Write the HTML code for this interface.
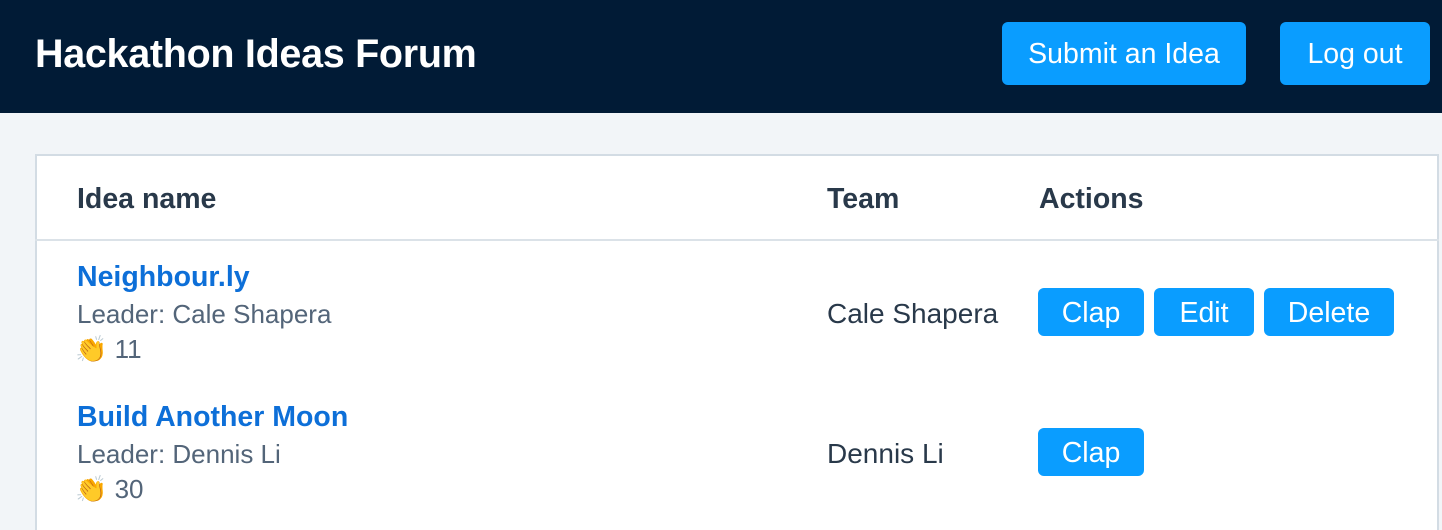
<!DOCTYPE html><html><head><style>
*{margin:0;padding:0;box-sizing:border-box}
html,body{width:1442px;height:530px;overflow:hidden}
body{background:#f2f5f8;font-family:"Liberation Sans",sans-serif;position:relative}
.hdr{position:absolute;left:0;top:0;width:1442px;height:113px;background:#011b36}
.t{position:absolute;left:35px;top:32px;color:#fff;font-size:39.5px;font-weight:bold;letter-spacing:-0.3px}
.b{position:absolute;background:#0a9dff;color:#fff;border-radius:6px;display:flex;align-items:center;justify-content:center;font-size:28.5px;padding-top:2px}
.card{position:absolute;left:35px;top:154px;width:1404px;height:376px;background:#fff;border:2px solid #d3dce4;border-bottom:none}
.line{position:absolute;left:35px;top:239px;width:1404px;height:2px;background:#dbe2e8}
.a{position:absolute;white-space:nowrap}
.h{font-size:28.5px;font-weight:bold;color:#29394a;top:183px}
.n{font-size:28.5px;font-weight:bold;color:#0d6fd8}
.l{font-size:26px;color:#536579}
.c{font-size:26px;color:#536579}
.tm{font-size:28px;color:#29394a}
</style></head><body>
<div class="hdr"></div>
<div class="t">Hackathon Ideas Forum</div>
<div class="b" style="left:1002px;top:22px;width:244px;height:63px">Submit an Idea</div>
<div class="b" style="left:1280px;top:22px;width:150px;height:63px">Log out</div>
<div class="card"></div>
<div class="line"></div>
<div class="a h" style="left:77px">Idea name</div>
<div class="a h" style="left:827px">Team</div>
<div class="a h" style="left:1039px">Actions</div>

<div class="a n" style="left:77px;top:261px">Neighbour.ly</div>
<div class="a l" style="left:77px;top:299px">Leader: Cale Shapera</div>
<div class="a c" style="left:75px;top:334px">👏 11</div>
<div class="a tm" style="left:827px;top:298px">Cale Shapera</div>
<div class="b" style="left:1038px;top:288px;width:106px;height:48px">Clap</div>
<div class="b" style="left:1154px;top:288px;width:100px;height:48px">Edit</div>
<div class="b" style="left:1264px;top:288px;width:130px;height:48px">Delete</div>

<div class="a n" style="left:77px;top:401px">Build Another Moon</div>
<div class="a l" style="left:77px;top:439px">Leader: Dennis Li</div>
<div class="a c" style="left:75px;top:474px">👏 30</div>
<div class="a tm" style="left:827px;top:438px">Dennis Li</div>
<div class="b" style="left:1038px;top:428px;width:106px;height:48px">Clap</div>
</body></html>
